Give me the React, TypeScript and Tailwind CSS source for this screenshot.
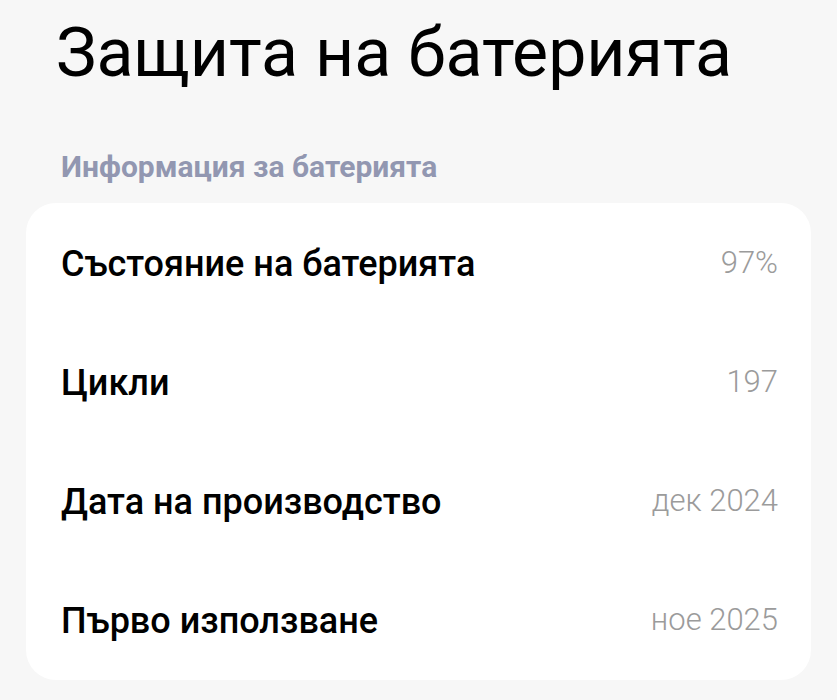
import React from 'react';

const rows = [
  { label: 'Състояние на батерията', value: '97%' },
  { label: 'Цикли', value: '197' },
  { label: 'Дата на производство', value: 'дек 2024' },
  { label: 'Първо използване', value: 'ное 2025' },
];

export default function App() {
  return (
    <div className="w-[837px] h-[700px] overflow-hidden bg-[#f7f7f7] font-['Roboto',sans-serif]">
      <h1 className="pl-[56px] pt-[15px] text-[68px] leading-[76px] font-normal text-black">
        Защита на батерията
      </h1>

      <div className="pl-[61px] mt-[59px] text-[30px] leading-[34px] font-bold text-[#9297b1]">
        Информация за батерията
      </div>

      <div className="mx-[26px] mt-[19px] bg-white rounded-[30px] pt-[1px]">
        {rows.map((row) => (
          <div key={row.label} className="h-[119px] flex items-center justify-between pl-[35px] pr-[33px]">
            <span className="text-[36px] font-medium text-black">{row.label}</span>
            <span className="text-[31px] font-light text-[#9b9b9b]">{row.value}</span>
          </div>
        ))}
      </div>
    </div>
  );
}
